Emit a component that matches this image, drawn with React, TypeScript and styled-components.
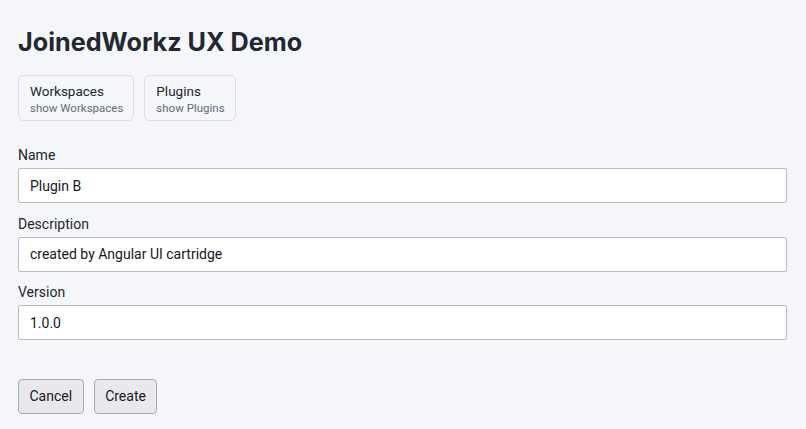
import styled, { createGlobalStyle } from 'styled-components'

const GlobalStyle = createGlobalStyle`
  html, body {
    margin: 0;
    padding: 0;
    background: #f5f6fa;
  }
  body {
    font-family: Roboto, "Liberation Sans", sans-serif;
    color: #1f2329;
  }
`

const Page = styled.div`
  display: flex;
  flex-direction: column;
  padding: 26px 19px 16px 18px;
  min-height: 100vh;
  box-sizing: border-box;
`

const Title = styled.h1`
  margin: 0 0 17px 0;
  font-family: Inter, Roboto, sans-serif;
  font-size: 25.2px;
  font-weight: 700;
  line-height: 32px;
  color: #222831;
`

const NavRow = styled.div`
  display: flex;
  gap: 10px;
  margin-bottom: 26px;
`

const NavCard = styled.button`
  display: flex;
  flex-direction: column;
  align-items: flex-start;
  height: 46px;
  padding: 7px 10px 0 11px;
  box-sizing: border-box;
  background: #f5f6fa;
  border: 1px solid #dcdee3;
  border-radius: 5px;
  font-family: inherit;
  cursor: pointer;
  text-align: left;
`

const NavTitle = styled.span`
  font-size: 13.5px;
  line-height: 17px;
  color: #22262c;
`

const NavSub = styled.span`
  font-size: 11.5px;
  line-height: 16px;
  color: #636b75;
`

const Field = styled.div`
  display: flex;
  flex-direction: column;
  margin-bottom: 12.5px;
`

const Label = styled.label`
  font-size: 14px;
  line-height: 17px;
  margin-bottom: 4px;
  color: #22262c;
`

const Input = styled.input`
  height: 35px;
  box-sizing: border-box;
  padding: 0 11px;
  border: 1px solid #b9bbbf;
  border-radius: 2px;
  background: #ffffff;
  font-family: inherit;
  font-size: 14px;
  color: #16191d;
  outline: none;
`

const Actions = styled.div`
  display: flex;
  gap: 10px;
  margin-top: 26px;
`

const ActionButton = styled.button`
  height: 35px;
  padding: 0 10.5px;
  box-sizing: border-box;
  background: #e9e9ed;
  border: 1px solid #a9abb2;
  border-radius: 4px;
  font-family: inherit;
  font-size: 14px;
  color: #16191d;
  cursor: pointer;
`

const fields = [
  { label: 'Name', value: 'Plugin B' },
  { label: 'Description', value: 'created by Angular UI cartridge' },
  { label: 'Version', value: '1.0.0' },
]

export default function App() {
  return (
    <>
      <GlobalStyle />
      <Page>
        <Title>JoinedWorkz UX Demo</Title>
        <NavRow>
          <NavCard>
            <NavTitle>Workspaces</NavTitle>
            <NavSub>show Workspaces</NavSub>
          </NavCard>
          <NavCard>
            <NavTitle>Plugins</NavTitle>
            <NavSub>show Plugins</NavSub>
          </NavCard>
        </NavRow>
        {fields.map((f) => (
          <Field key={f.label}>
            <Label>{f.label}</Label>
            <Input defaultValue={f.value} />
          </Field>
        ))}
        <Actions>
          <ActionButton>Cancel</ActionButton>
          <ActionButton>Create</ActionButton>
        </Actions>
      </Page>
    </>
  )
}
